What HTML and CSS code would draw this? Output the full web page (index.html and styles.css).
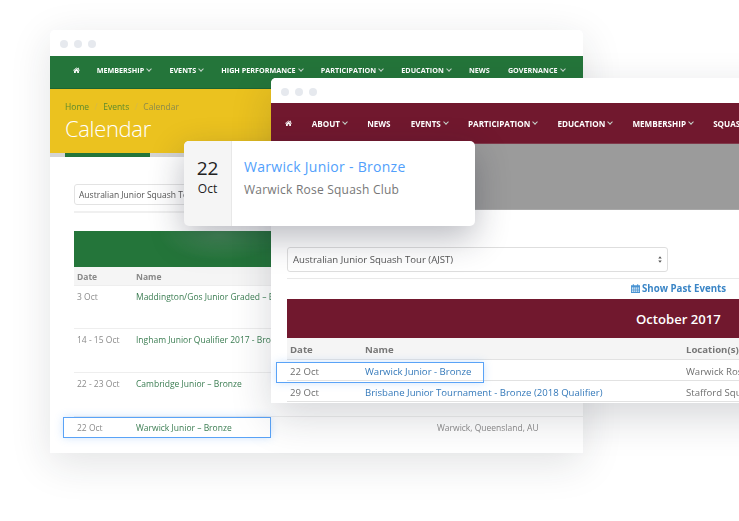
FILE: index.html
```html
<!DOCTYPE html>
<html lang="en">
<head>
<meta charset="utf-8">
<title>Calendar</title>
<link rel="stylesheet" href="styles.css">
</head>
<body>
<main class="canvas">
  <section class="win win-back">
    <div class="chrome"><i></i><i></i><i></i></div>
    <nav class="nav nav-green">
      <svg class="home" viewBox="0 0 12 10"><path d="M6 .5 0 5.600l.6.7L6 1.900l5.400 4.400.6-.7-2-1.700V1.200H8.600v1.300zM1.800 6.200V10h3V7.200h2.400V10h3V6.200L6 2.800z"/></svg>
      <a class="caret">Membership</a><a class="caret">Events</a><a class="caret">High Performance</a><a class="caret">Participation</a><a class="caret">Education</a><a>News</a><a class="caret">Governance</a>
    </nav>
    <header class="hero">
      <div class="crumbs"><span class="lnk">Home</span><span class="sep">/</span><span class="lnk">Events</span><span class="sep">/</span><span>Calendar</span></div>
      <h1>Calendar</h1>
    </header>
    <div class="tab-rule"><span></span></div>
    <div class="body-back">
      <div class="sel">Australian Junior Squash Tour (AJST)</div>
      <hr>
      <div class="band"></div>
      <div class="trow thead"><span>Date</span><span>Name</span></div>
      <div class="trow r1"><span>3 Oct</span><a>Maddington/Gos Junior Graded – Bronze</a></div>
      <div class="trow r2"><span>14 - 15 Oct</span><a>Ingham Junior Qualifier 2017 - Bronze</a></div>
      <div class="trow r2"><span>22 - 23 Oct</span><a>Cambridge Junior – Bronze</a></div>
      <div class="trow r3"><span>22 Oct</span><a>Warwick Junior – Bronze</a><span>Warwick, Queensland, AU</span></div>
    </div>
  </section>
  <div class="hl hl-back"></div>

  <section class="win win-front">
    <div class="chrome"><i></i><i></i><i></i></div>
    <nav class="nav nav-red">
      <svg class="home" viewBox="0 0 12 10"><path d="M6 .5 0 5.600l.6.7L6 1.900l5.400 4.400.6-.7-2-1.700V1.200H8.600v1.300zM1.800 6.200V10h3V7.200h2.400V10h3V6.200L6 2.800z"/></svg>
      <a class="caret">About</a><a>News</a><a class="caret">Events</a><a class="caret">Participation</a><a class="caret">Education</a><a class="caret">Membership</a><a>Squash</a>
    </nav>
    <div class="hero-gray"></div>
    <div class="body-front">
      <div class="sel sel-front">Australian Junior Squash Tour (AJST)<svg class="updown" viewBox="0 0 6 10"><path d="M3 0l2.600 3.600H.4zM3 10 .4 6.400h5.200z"/></svg></div>
      <hr>
      <div class="past">
        <svg class="cal" viewBox="0 0 10 10"><path d="M0 1.500h2V.3h1.200v1.200h3.600V.3H8v1.200h2V10H0zm1 2.500v1.300h1.700V4zm2.500 0v1.300h1.400V4zm2.200 0v1.300h1.300V4zM8 4v1.300h1V4zM1 6v1.300h1.700V6zm2.500 0v1.300h1.400V6zm2.200 0v1.300h1.300V6zM8 6v1.300h1V6zM1 8v1h1.700V8zm2.500 0v1h1.400V8zm2.200 0v1h1.300V8zM8 8v1h1V8z" fill-rule="evenodd"/></svg>
        <b>Show Past Events</b>
      </div>
      <div class="month">October 2017</div>
      <div class="frow fhead"><span>Date</span><span>Name</span><span>Location(s)</span></div>
      <div class="frow"><span>22 Oct</span><a>Warwick Junior - Bronze</a><span>Warwick Rose Squash Club</span></div>
      <div class="frow"><span>29 Oct</span><a>Brisbane Junior Tournament - Bronze (2018 Qualifier)</a><span>Stafford Squash Centre</span></div>
    </div>
  </section>
  <div class="hl hl-front"></div>

  <article class="card">
    <div class="card-date"><strong>22</strong><span>Oct</span></div>
    <div class="card-main">
      <h2>Warwick Junior - Bronze</h2>
      <p>Warwick Rose Squash Club</p>
    </div>
  </article>
</main>
</body>
</html>
```

FILE: styles.css
```css
* { box-sizing: border-box; }
html, body { margin: 0; padding: 0; background: #fff; }
body { width: 739px; height: 521px; overflow: hidden; font-family: "Open Sans", "Noto Sans", sans-serif; }
.canvas { position: relative; width: 739px; height: 521px; overflow: hidden; }

.win { position: absolute; background: #fff; border-radius: 5px 5px 0 0; overflow: hidden; }
.win-back { left: 50px; top: 30px; width: 533px; height: 423px; box-shadow: 0 10px 40px rgba(30, 35, 50, .13); }
.win-front { left: 271px; top: 78px; width: 520px; height: 325px; box-shadow: 0 14px 40px rgba(30, 35, 50, .18); }

.chrome { height: 26px; display: flex; align-items: center; gap: 6px; padding: 2px 0 0 10px; background: #fff; }
.win-front .chrome { height: 25px; padding-left: 10px; }
.chrome i { width: 8px; height: 8px; border-radius: 50%; background: #e6e9ee; }

.nav { display: flex; align-items: center; color: #fff; font-size: 7.200px; font-weight: 700; text-transform: uppercase; white-space: nowrap; filter: blur(.3px); }
.nav-green { height: 33px; padding: 0 0 4px 23px; gap: 18.200px; background: #24753a; border-bottom: 1px solid #1d6431; }
.nav-green .home { margin-right: -1.500px; }
.nav-red { height: 41px; padding: 0 0 0 14px; gap: 20.200px; background: #71182e; font-size: 8.100px; border-bottom: 1px solid #7f3a4b; }
.nav-red .home { margin-right: -.500px; }
.home { flex: none; width: 7px; height: 6px; fill: #fff; }
.caret { display: inline-flex; align-items: center; gap: 3px; }
.caret::after { content: ""; width: 3px; height: 3px; margin-top: -2px; border-right: 1px solid #c7d6cc; border-bottom: 1px solid #c7d6cc; transform: rotate(45deg); }

.hero { height: 64px; padding: 11px 0 0 15px; background: #ebc21f; }
.crumbs { display: flex; gap: 5.500px; font-size: 8.500px; line-height: 13px; color: #8c8a4c; filter: blur(.3px); }
.crumbs .lnk { color: #5c8a2e; }
.crumbs .sep { color: #d5b94a; }
.hero h1 { margin: 0; font-size: 22px; line-height: 30px; font-weight: 300; color: #fff; letter-spacing: -.35px; }
.tab-rule { height: 4px; background: #d4d4d4; }
.tab-rule span { display: block; width: 85px; height: 4px; margin-left: 15px; background: #24753a; }

.body-back { padding: 27px 0 0 24px; }
.sel { height: 21px; width: 420px; border: 1px solid #e3e3e3; border-radius: 3px; padding-left: 4px; font-size: 8.500px; line-height: 19px; color: #555; filter: blur(.3px); }
.body-back hr { margin: 6px 0 0; border: 0; height: 2px; background: #f0f0f0; }
.band { height: 36px; margin-top: 18px; background: radial-gradient(ellipse 60px 26px at 145px 4px, rgba(255, 255, 255, .14), rgba(255, 255, 255, 0)), #24753a; }
.trow { display: grid; grid-template-columns: 59px 301px 1fr; font-size: 8.500px; color: #8b8b8b; filter: blur(.3px); border-bottom: 1px solid #eeeeee; padding-left: 3px; }
.trow a { color: #3b7d52; white-space: nowrap; }
.thead { height: 19px; line-height: 20px; background: #f5f5f5; font-weight: 700; color: #888; }
.r1 { height: 43px; padding-top: 4px; line-height: 14px; }
.r2 { height: 44px; padding-top: 4px; line-height: 14px; }
.r3 { height: 20px; padding-top: 4px; line-height: 14px; border: 0; }

.hero-gray { height: 66px; background: #9b9b9b; border-bottom: 1px solid #a8a8a8; }
.body-front { padding: 37px 0 0 16px; }
.sel-front { display: flex; align-items: center; justify-content: space-between; width: 381px; height: 25px; padding: 0 5px; font-size: 9.600px; color: #555; border-color: #dedede; }
.updown { width: 4px; height: 7px; fill: #555; }
.body-front hr { margin: 6px 0 0; border: 0; height: 1px; background: #e9e9e9; }
.past { display: flex; align-items: center; gap: 2px; height: 20px; padding: 0 0 2px 344px; color: #3a85c6; font-size: 9.700px; white-space: nowrap; filter: blur(.3px); }
.past b { font-weight: 700; }
.cal { flex: none; width: 9px; height: 9px; fill: #4a94d3; }
.month { width: 504px; height: 39px; background: #71182e; color: #fff; font-size: 13.100px; font-weight: 600; line-height: 40px; padding-left: 349px; white-space: nowrap; }
.frow { display: grid; grid-template-columns: 75px 321px 1fr; height: 21px; padding: 2px 0 0 3px; font-size: 9.600px; line-height: 20px; color: #6f6f6f; border-bottom: 1px solid #e2e2e2; white-space: nowrap; filter: blur(.3px); }
.frow a { color: #3479ba; }
.fhead { height: 22px; padding-top: 1px; background: #f5f5f5; color: #777; font-weight: 700; line-height: 22px; }

.hl { position: absolute; border: 1px solid #5aa3f7; box-shadow: 0 0 8px rgba(90, 163, 247, .28); }
.hl-back { left: 63px; top: 417px; width: 208px; height: 21px; }
.hl-front { left: 276px; top: 362px; width: 208px; height: 21px; }

.card { position: absolute; left: 184px; top: 141px; width: 291px; height: 85px; display: flex; background: #fff; border-radius: 5px; overflow: hidden; }
.card-date { width: 48px; display: flex; flex-direction: column; align-items: center; padding-top: 15px; background: #f5f5f5; border-right: 1px solid #e8e8e8; color: #222; }
.card-date strong { font-size: 19px; font-weight: 400; line-height: 24px; }
.card-date span { font-size: 12px; line-height: 17px; font-weight: 500; }
.card-main { padding: 16px 0 0 12px; }
.card-main h2 { margin: 0; font-size: 14px; line-height: 19px; font-weight: 500; color: #529ffc; letter-spacing: .28px; }
.card-main p { margin: 6px 0 0; font-size: 12px; line-height: 16px; color: #777; letter-spacing: .22px; }
.canvas::after { content: ""; position: absolute; left: 184px; top: 141px; width: 291px; height: 85px; border-radius: 5px; box-shadow: 0 12px 34px rgba(25, 30, 50, .3); pointer-events: none; }
```
